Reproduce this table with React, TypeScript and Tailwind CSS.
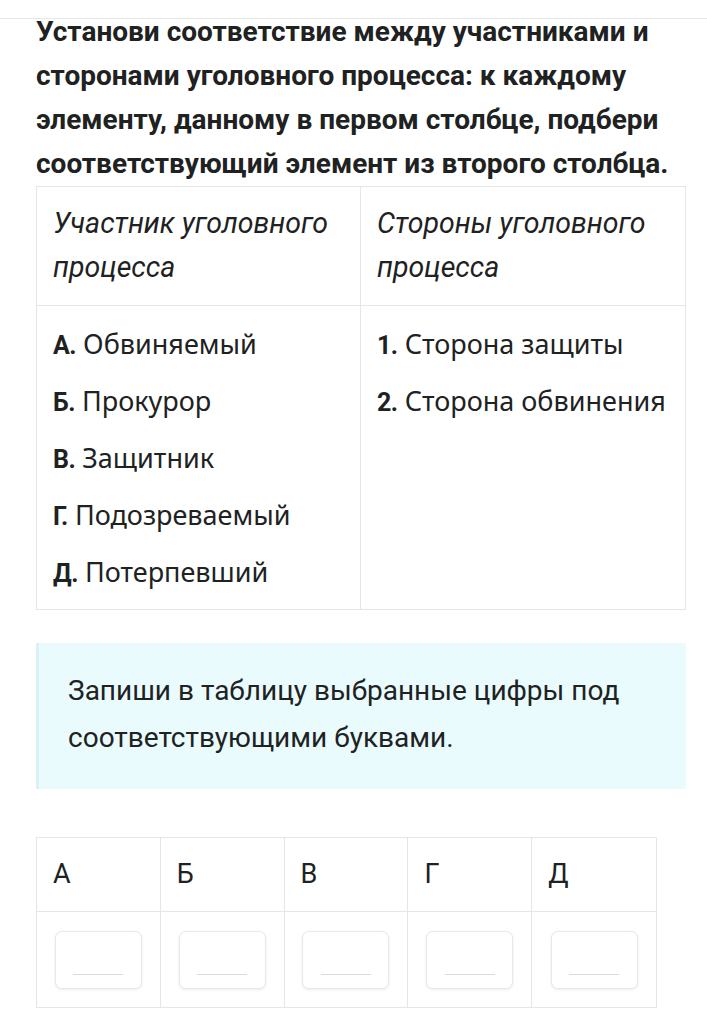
const headingLines = [
  "Установи соответствие между участниками и",
  "сторонами уголовного процесса: к каждому",
  "элементу, данному в первом столбце, подбери",
  "соответствующий элемент из второго столбца.",
];

const participants = [
  { letter: "А", text: "Обвиняемый" },
  { letter: "Б", text: "Прокурор" },
  { letter: "В", text: "Защитник" },
  { letter: "Г", text: "Подозреваемый" },
  { letter: "Д", text: "Потерпевший" },
];

const sides = [
  { num: "1", text: "Сторона защиты" },
  { num: "2", text: "Сторона обвинения" },
];

const letters = ["А", "Б", "В", "Г", "Д"];

const cond = "font-['Roboto','Liberation_Sans',sans-serif]";

const AnswerBox = () => (
  <div className="w-[87px] h-[58px] mx-auto rounded-[7px] border border-[#e6e9e6] bg-white shadow-[0_1px_3px_rgba(0,0,0,0.08)] flex items-end justify-center pb-[13px]">
    <div className="w-[50px] h-px bg-[#dcdcdc]" />
  </div>
);

export default function App() {
  return (
    <div className="min-h-screen w-full bg-white text-[#202222] font-['Roboto','Liberation_Sans',sans-serif]">
      <div className="h-[19px] border-b border-[#e4e6e8]" />

      <div className="px-[36px] pb-[20px]">
        <h1 className="-mt-[9px] text-[28px] leading-[44px] font-bold whitespace-nowrap">
          {headingLines.map((l) => (
            <div key={l}>{l}</div>
          ))}
        </h1>

        {/* таблица соответствия */}
        <div className="w-[650px] border border-[#e3e7e9] grid grid-cols-2">
          <div className="px-[16px] py-[15px] border-r border-b border-[#e3e7e9] italic text-[28.5px] leading-[44px]">
            Участник уголовного процесса
          </div>
          <div className="px-[16px] py-[15px] border-b border-[#e3e7e9] italic text-[28.5px] leading-[44px]">
            Стороны уголовного процесса
          </div>
          <div className="px-[16px] pt-[16px] pb-[14px] border-r border-[#e3e7e9] flex flex-col gap-[12px]">
            {participants.map((p) => (
              <div key={p.letter} className="h-[45px] leading-[44px] text-[27px] font-['Noto_Sans',sans-serif] whitespace-nowrap">
                <span className={`font-bold text-[25px] tracking-[-0.5px] ${cond}`}>{p.letter}.</span> {p.text}
              </div>
            ))}
          </div>
          <div className="px-[16px] pt-[16px] pb-[14px] flex flex-col gap-[12px]">
            {sides.map((s) => (
              <div key={s.num} className="h-[45px] leading-[44px] text-[27px] font-['Noto_Sans',sans-serif] whitespace-nowrap">
                <span className={`font-bold text-[25px] tracking-[-0.5px] ${cond}`}>{s.num}.</span> {s.text}
              </div>
            ))}
          </div>
        </div>

        {/* подсказка */}
        <div className="mt-[33px] w-[650px] bg-[#eafbfd] border-l-[3px] border-[#dcf1f3] pl-[29px] pt-[24px] pb-[28px] text-[28px] leading-[47px]">
          Запиши в таблицу выбранные цифры под
          <br />
          соответствующими буквами.
        </div>

        {/* таблица ответа */}
        <div className="mt-[48px] w-[621px] border border-[#e3e7e9] grid grid-cols-5">
          {letters.map((l, i) => (
            <div
              key={l}
              className={`h-[74px] px-[16px] flex items-center border-b border-[#e3e7e9] text-[27px] ${cond} ${i < 4 ? "border-r" : ""}`}
            >
              {l}
            </div>
          ))}
          {letters.map((l, i) => (
            <div
              key={l + "-box"}
              className={`h-[95px] pt-[19px] border-[#e3e7e9] ${i < 4 ? "border-r" : ""}`}
            >
              <AnswerBox />
            </div>
          ))}
        </div>
      </div>
    </div>
  );
}
